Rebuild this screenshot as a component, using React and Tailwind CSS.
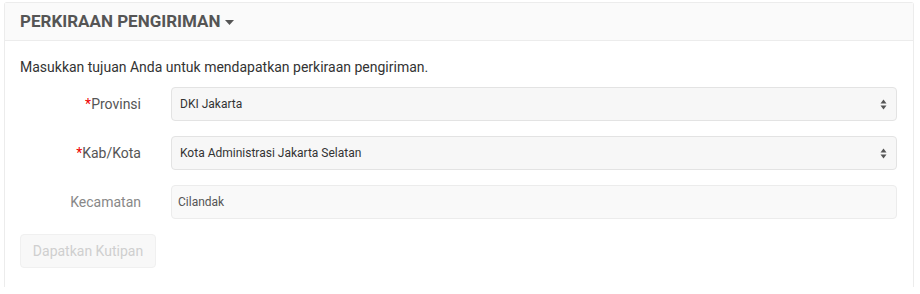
import React from "react";

function SelectBox({ value }) {
  return (
    <div className="flex h-[34px] flex-1 items-center justify-between rounded-[4px] border border-[#e3e3e3] bg-[#f7f7f7] pl-[8px] pr-[9px] text-[12px] text-[#333]">
      <span>{value}</span>
      <svg width="7" height="11" viewBox="0 0 7 11" className="text-[#555]">
        <path d="M3.5 0.5 L6.5 4.5 L0.5 4.5 Z" fill="currentColor" />
        <path d="M0.5 6.5 L6.5 6.5 L3.5 10.5 Z" fill="currentColor" />
      </svg>
    </div>
  );
}

function Row({ label, required, children }) {
  return (
    <div className="flex items-center gap-[30px]">
      <div className={"w-[121px] text-right text-[14px] " + (required ? "text-[#555]" : "text-[#888]")}>
        {required && <span className="text-[#e00]">*</span>}
        {label}
      </div>
      {children}
    </div>
  );
}

export default function App() {
  return (
    <div className="bg-white pl-[4px] pt-[2px] font-['Roboto',sans-serif]" style={{ height: 294 }}>
      <div className="h-[285px] w-[910px] rounded-t-[3px] border border-b-0 border-[#ececec]">
        {/* header */}
        <div className="flex h-[38px] items-center border-b border-[#ececec] bg-[#fafafa] px-[15px]">
          <span className="text-[17px] font-bold text-[#555]">PERKIRAAN PENGIRIMAN</span>
          <svg width="9" height="5" viewBox="0 0 9 5" className="ml-[4px] mt-[1px] text-[#555]">
            <path d="M0 0 L9 0 L4.5 5 Z" fill="currentColor" />
          </svg>
        </div>

        {/* body */}
        <div className="px-[15px] pt-[16px]">
          <p className="text-[14px] leading-[20px] text-[#333]">
            Masukkan tujuan Anda untuk mendapatkan perkiraan pengiriman.
          </p>
          <div className="mt-[10px] flex flex-col gap-[15px] pr-[1px]">
            <Row label="Provinsi" required>
              <SelectBox value="DKI Jakarta" />
            </Row>
            <Row label="Kab/Kota" required>
              <SelectBox value="Kota Administrasi Jakarta Selatan" />
            </Row>
            <Row label="Kecamatan">
              <div className="flex h-[34px] flex-1 items-center rounded-[4px] border border-[#ececec] bg-[#f9f9f9] pl-[6px] text-[12px] text-[#555]">
                Cilandak
              </div>
            </Row>
          </div>
          <button className="mt-[15px] h-[34px] w-[136px] rounded-[4px] border border-[#f0f0f0] bg-[#f8f8f8] text-[14px] text-[#cfcfcf]">
            Dapatkan Kutipan
          </button>
        </div>
      </div>
    </div>
  );
}
